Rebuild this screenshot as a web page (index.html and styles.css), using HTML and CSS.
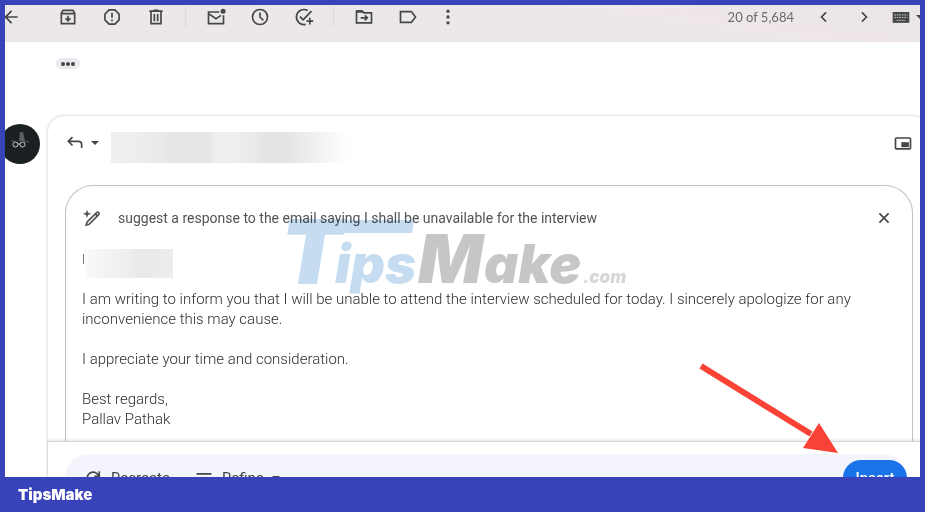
FILE: index.html
```html
<!DOCTYPE html>
<html lang="en">
<head>
    <meta charset="UTF-8">
    <meta name="viewport" content="width=device-width, initial-scale=1.0">
    <title>Mail - Help me write</title>
    <link rel="stylesheet" href="styles.css">
</head>
<body>

    <main class="screen">
        <header class="toolbar">
            <button class="tool back" aria-label="Back">
                <svg class="icon" viewBox="0 0 24 24"><path d="M20 11H7.800l5.600-5.600L12 4l-8 8 8 8 1.400-1.400L7.800 13H20z"/></svg>
            </button>
            <button class="tool" aria-label="Archive">
                <svg class="icon line" viewBox="0 0 24 24"><path d="M4 7.500V20h16V7.500L18 4H6zM4 8h16M12 10.500V16M9 13.500l3 3 3-3"/></svg>
            </button>
            <button class="tool" aria-label="Report spam">
                <svg class="icon line" viewBox="0 0 24 24"><path d="M8.500 3.500h7l5 5v7l-5 5h-7l-5-5v-7zM12 7v6M12 15v2"/></svg>
            </button>
            <button class="tool" aria-label="Delete">
                <svg class="icon line" viewBox="0 0 24 24"><path d="M6 6v14h12V6M4 5h16M9 4h6M10 8.500v8.500M14 8.500v8.500"/></svg>
            </button>
            <span class="divider"></span>
            <button class="tool" aria-label="Mark as unread">
                <svg class="icon line" viewBox="0 0 24 24"><path d="M16 6H3v14h18V10M3 8l9 6 6-4"/><circle class="solid" cx="20.500" cy="5" r="3"/></svg>
            </button>
            <button class="tool" aria-label="Snooze">
                <svg class="icon line" viewBox="0 0 24 24"><circle cx="12" cy="12" r="9"/><path d="M12 6.500V12l4 4"/></svg>
            </button>
            <button class="tool" aria-label="Add to tasks">
                <svg class="icon line" viewBox="0 0 24 24"><path d="M16.500 4.300A9 9 0 1 0 14 20.800M7 11.500l4 4L21 5M19 13v8M15 17h8"/></svg>
            </button>
            <span class="divider"></span>
            <button class="tool" aria-label="Move to">
                <svg class="icon line" viewBox="0 0 24 24"><path d="M3 5v14h18V7h-9l-2-2zM8 13h8M13 10l3 3-3 3"/><path class="solid" d="M3 4h7l2 3H3z"/></svg>
            </button>
            <button class="tool" aria-label="Labels">
                <svg class="icon line" viewBox="0 0 24 24"><path d="M3 5.500h13l5 6.500-5 6.500H3z"/></svg>
            </button>
            <button class="tool more" aria-label="More">
                <svg class="icon" viewBox="0 0 24 24"><circle cx="12" cy="5" r="2"/><circle cx="12" cy="12" r="2"/><circle cx="12" cy="19" r="2"/></svg>
            </button>
            <span class="count">20 of 5,684</span>
            <button class="tool page" aria-label="Newer">
                <svg class="icon line" viewBox="0 0 24 24"><path d="M14.500 6.500L9 12l5.500 5.500"/></svg>
            </button>
            <button class="tool page" aria-label="Older">
                <svg class="icon line" viewBox="0 0 24 24"><path d="M9.500 6.500L15 12l-5.500 5.500"/></svg>
            </button>
            <button class="tool keyboard" aria-label="Input tools">
                <svg class="icon" viewBox="0 0 24 24"><path d="M2 6h20v13H2z"/><path class="keys" d="M4 9.500h16M4 12.500h16M7 16h10"/></svg>
                <svg class="caret" viewBox="0 0 10 5"><path d="M0 0h10L5 5z"/></svg>
            </button>
        </header>

        <section class="thread">
            <button class="trimmed" aria-label="Show trimmed content"><i></i><i></i><i></i></button>

            <div class="reply">
                <svg class="avatar" viewBox="0 0 40 40">
                    <circle cx="20" cy="20" r="20" fill="#1b2022"/>
                    <path d="M20 8h3l2 9h-6z" fill="#596062"/>
                    <path d="M11 17h4M24 17l5 1" stroke="#596062"/>
                    <g fill="none" stroke="#c9cdcd"><circle cx="15.500" cy="20.500" r="2.500"/><circle cx="22.500" cy="20.500" r="2.500"/><path d="M18 20h2"/></g>
                </svg>

                <article class="card">
                    <div class="recipient">
                        <button class="reply-type" aria-label="Type of response">
                            <svg class="icon line" viewBox="0 0 24 24"><path d="M9 5L4 10l5 5M4 10h12q4 0 4 4v4"/></svg>
                            <svg class="caret" viewBox="0 0 10 5"><path d="M0 0h10L5 5z"/></svg>
                        </button>
                        <span class="redacted address"></span>
                        <button class="popout" aria-label="Pop out reply">
                            <svg class="icon line" viewBox="0 0 24 24"><rect x="3" y="6" width="18" height="13" rx="1"/><path class="solid" d="M10 11h9v6h-9z"/></svg>
                        </button>
                    </div>

                    <div class="draft">
                        <div class="prompt">
                            <svg class="icon line" viewBox="0 0 24 24"><path d="M6 17L17.500 5.500q1.500-1 2.500 0t0 2.500L8.500 19.500 5 20.500zM16 7l2.500 2.500"/><path class="solid" d="M6 2l1.300 3.700L11 7 7.300 8.300 6 12 4.700 8.300 1 7l3.700-1.300z"/></svg>
                            <span>suggest a response to the email saying I shall be unavailable for the interview</span>
                            <button class="close" aria-label="Close">
                                <svg class="icon line" viewBox="0 0 24 24"><path d="M6.500 6.500l11 11M17.500 6.500l-11 11"/></svg>
                            </button>
                        </div>
                        <div class="message">
                            <p class="greeting"><span class="stroke"></span><span class="redacted name"></span></p>
                            <p>I am writing to inform you that I will be unable to attend the interview scheduled for today. I sincerely apologize for any inconvenience this may cause.</p>
                            <p>I appreciate your time and consideration.</p>
                            <p>Best regards,<br>Pallav Pathak</p>
                        </div>
                    </div>

                    <div class="actions">
                        <div class="action-bar">
                            <button class="action">
                                <svg class="icon line" viewBox="0 0 24 24"><path d="M19 13a7 7 0 1 1-2-6l2 2M19.500 4v6h-6"/></svg>
                                Recreate
                            </button>
                            <button class="action">
                                <svg class="icon line" viewBox="0 0 24 24"><path d="M3 7h18M6 12h12M10 17h4"/></svg>
                                Refine
                                <svg class="caret" viewBox="0 0 10 5"><path d="M0 0h10L5 5z"/></svg>
                            </button>
                            <button class="insert">Insert</button>
                        </div>
                    </div>
                </article>
            </div>
        </section>

        <!-- Site watermark -->
        <svg class="watermark" viewBox="0 0 340 80">
            <g class="blue">
                <path d="M8 10h119l-2 13H6z"/>
                <text class="t" x="-5" y="73">T</text>
                <text class="small" x="48" y="73">ips</text>
            </g>
            <g class="grey">
                <text class="m" x="131" y="73">M</text>
                <text class="small" x="197" y="73">ake</text>
                <text class="com" x="296" y="73">.com</text>
            </g>
        </svg>

        <!-- Arrow pointing at the Insert button -->
        <svg class="pointer" viewBox="0 0 140 92">
            <path d="M2 3l110 68" stroke="#fb4237" stroke-width="6"/>
            <path d="M120 60l19 30-35-5z" fill="#fb4237"/>
        </svg>
    </main>

    <footer>TipsMake</footer>

</body>
</html>
```

FILE: styles.css
```css
/* General Page Styles */
* {
    box-sizing: border-box;
}

body {
    display: flex;
    flex-direction: column;
    height: 100vh;
    margin: 0;
    padding: 5px 5px 0;
    background-color: #3843b9;
    font-family: Roboto, sans-serif;
    font-size: 15px;
    color: #2c2e30;
}

button {
    display: flex;
    align-items: center;
    justify-content: center;
    margin: 0;
    padding: 0;
    border: none;
    background: none;
    color: #444746;
    font: inherit;
    cursor: pointer;
}

.screen {
    position: relative;
    display: flex;
    flex-direction: column;
    flex: 1;
    min-height: 0;
    overflow: hidden;
    background: white;
}

/* Icons */
.icon {
    flex: none;
    width: 20px;
    height: 20px;
    fill: currentColor;
}

.line {
    fill: none;
    stroke: currentColor;
    stroke-width: 2;
}

.line .solid {
    fill: currentColor;
    stroke: none;
}

.caret {
    flex: none;
    width: 8px;
    height: 4px;
    fill: currentColor;
}

/* Toolbar */
.toolbar {
    display: flex;
    flex: none;
    height: 37px;
    padding-bottom: 13px;
    background: linear-gradient(8deg, #ece6e8 0%, #ece8e9 25%, #ebe7ea 50%, #efe7e7 75%, #e9e5ea 100%);
}

.tool {
    flex: none;
    width: 44px;
}

.back {
    width: 12px;
    margin-right: 29px;
}

.more {
    width: 36px;
}

.page {
    width: 40px;
}

.keyboard {
    gap: 5px;
    width: 36px;
    padding-left: 7px;
    justify-content: flex-start;
    overflow: hidden;
}

.keys {
    fill: none;
    stroke: #e4dfe1;
    stroke-dasharray: 2 1;
}

.divider {
    width: 1px;
    height: 20px;
    margin: 2px 8px 0 7px;
    background: #dcd8dc;
}

.count {
    margin-left: auto;
    padding-right: 10px;
    color: #6a686b;
    font-family: Lato, sans-serif;
    font-size: 13px;
    line-height: 25px;
}

/* Thread */
.thread {
    display: flex;
    flex-direction: column;
    flex: 1;
    min-height: 0;
}

.trimmed {
    gap: 1px;
    width: 24px;
    height: 11px;
    margin: 16px 0 47px 51px;
    border-radius: 6px;
    background: #e8eaed;
}

.trimmed i {
    width: 4px;
    height: 4px;
    border-radius: 50%;
    background: #444746;
}

.reply {
    display: flex;
    flex: 1;
    gap: 8px;
    min-height: 0;
    margin: 0 -8px 0 -5px;
}

.avatar {
    flex: none;
    width: 40px;
    height: 40px;
    margin-top: 8px;
}

.card {
    display: flex;
    flex-direction: column;
    flex: 1;
    min-width: 0;
    border-radius: 16px 16px 0 0;
    box-shadow: 0 0 3px rgba(60, 64, 67, 0.35);
}

.recipient {
    display: flex;
    align-items: flex-start;
    height: 69px;
    padding: 16px 15px 0 17px;
}

.reply-type {
    gap: 6px;
    height: 22px;
    margin-right: 12px;
}

.redacted {
    display: block;
    background: linear-gradient(90deg, #f0f0f0, #ebebeb 20%, #e5e5e5 26% 40%, #eeeeee 44% 52%, #eaeaea 60%, #e3e3e3 65% 73%, #e9e9e9 78%, #f1f1f1 87%, #f7f7f7 92%, #ffffff);
}

.address {
    width: 238px;
    height: 31px;
}

.popout {
    height: 22px;
    margin-left: auto;
}

/* Generated draft */
.draft {
    flex: 1;
    min-height: 0;
    margin: 0 15px 0 17px;
    padding: 22px 18px 0 16px;
    overflow: hidden;
    border: 1px solid #bfc2c1;
    border-bottom: none;
    border-radius: 28px 28px 0 0;
}

.prompt {
    display: flex;
    align-items: center;
    gap: 16px;
    height: 20px;
    color: #505355;
    font-size: 14px;
}

.close {
    margin-left: auto;
}

.message {
    padding-top: 21px;
    font-weight: 300;
    line-height: 20px;
}

.message p {
    margin: 0 0 20px;
}

.message .greeting {
    display: flex;
    align-items: flex-start;
    height: 20px;
}

.stroke {
    width: 1px;
    height: 10px;
    margin: 5px 1px 0;
    background: #777777;
}

.name {
    width: 88px;
    height: 29px;
    background: linear-gradient(90deg, #fafafa, #f3f3f3 25%, #eeeeee 50%, #e9e9e9 65%, #ededed);
}

/* Bottom actions */
.actions {
    flex: none;
    height: 36px;
    padding: 12px 21px 0 17px;
    border-top: 1px solid #d5d6d8;
    background: white;
    box-shadow: 0 -1px 3px rgba(60, 64, 67, 0.15);
}

.action-bar {
    display: flex;
    align-items: center;
    gap: 24px;
    height: 48px;
    padding-left: 18px;
    border-radius: 24px;
    background: #f4f4fc;
}

.action {
    gap: 8px;
}

.insert {
    width: 64px;
    height: 36px;
    margin-left: auto;
    border-radius: 18px;
    background: #1a73e8;
    color: white;
    font-weight: 500;
}

/* Overlays */
.watermark {
    position: absolute;
    top: 205px;
    left: 282px;
    width: 340px;
    height: 80px;
    overflow: visible;
    opacity: 0.6;
    mix-blend-mode: multiply;
    pointer-events: none;
    font-family: Inter, sans-serif;
    font-weight: 900;
    font-style: italic;
}

.blue {
    fill: #9fc5e8;
}

.grey {
    fill: #a0a0a0;
}

.t {
    font-size: 86px;
    stroke: #9fc5e8;
    stroke-width: 2;
}

.m {
    font-size: 68px;
}

.small {
    font-size: 53px;
}

.com {
    font-size: 17px;
    opacity: 0.7;
}

.pointer {
    position: absolute;
    right: 81px;
    bottom: 22px;
    width: 140px;
    height: 92px;
    pointer-events: none;
}

/* Footer */
footer {
    height: 35px;
    padding-left: 13px;
    color: white;
    font-family: Inter, sans-serif;
    font-size: 15px;
    font-weight: 900;
    line-height: 35px;
}
```
